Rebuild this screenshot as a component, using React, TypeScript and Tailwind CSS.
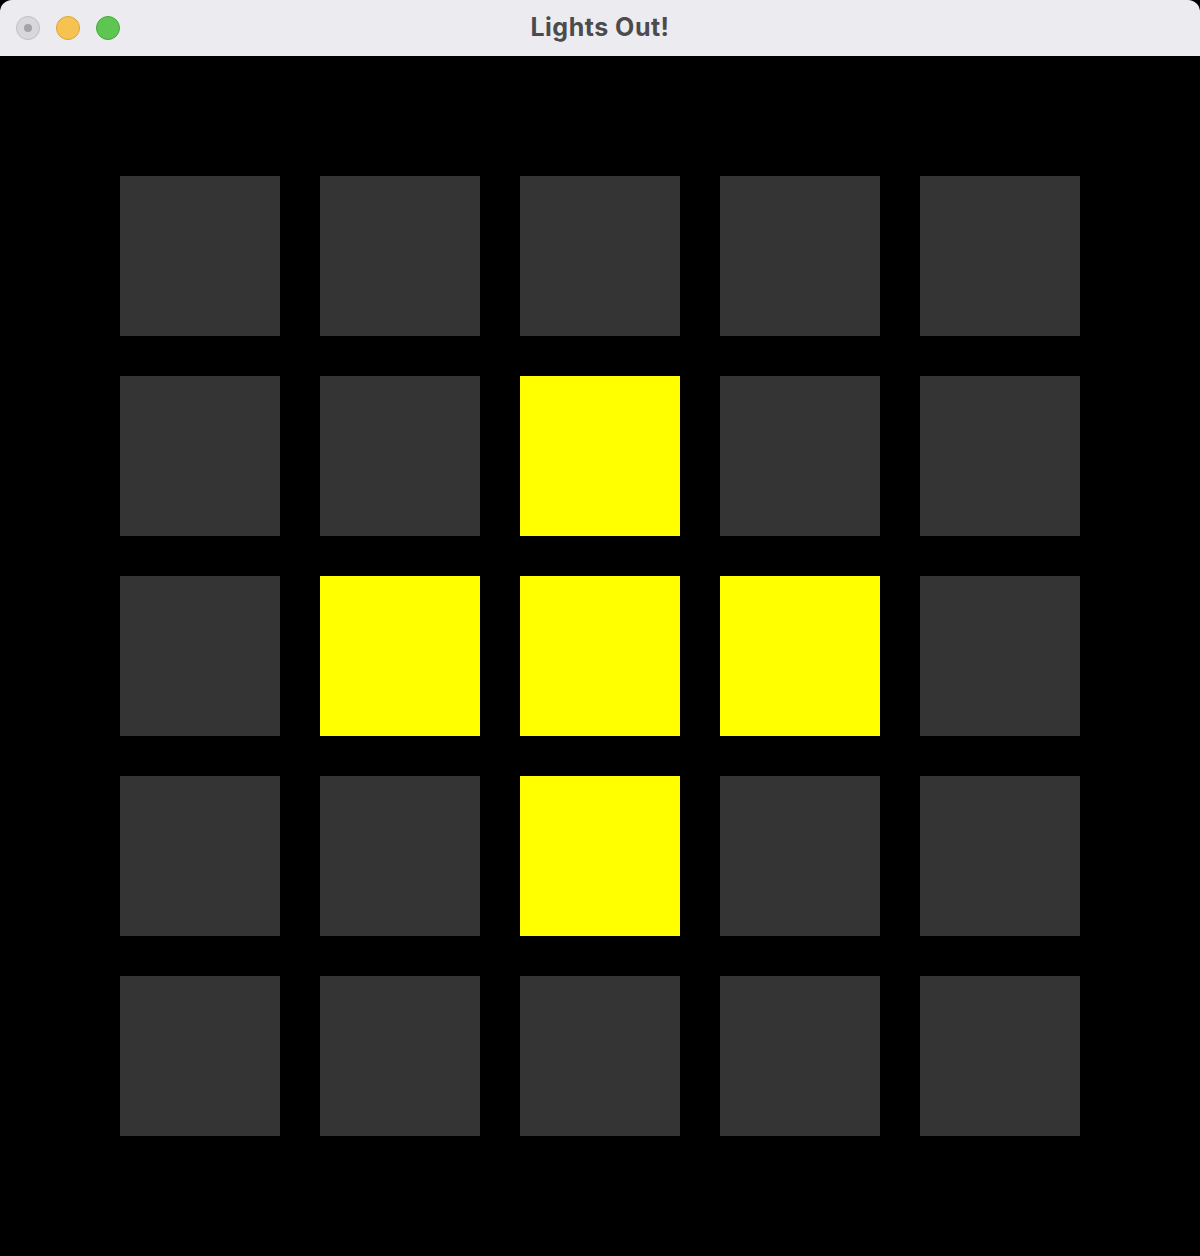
const LIT = new Set(['1-2', '2-1', '2-2', '2-3', '3-2']);

export default function App() {
  const rows = [0, 1, 2, 3, 4];
  return (
    <div className="w-[1200px] h-[1256px] bg-black flex flex-col">
      {/* Window title bar */}
      <div className="h-14 bg-[#ececf0] rounded-t-xl flex items-center relative shrink-0">
        <div className="flex gap-4 pl-4">
          <div className="w-6 h-6 rounded-full bg-[#d8d8dc] border border-[#bfbfc4] flex items-center justify-center">
            <div className="w-2 h-2 rounded-full bg-[#a4a4a8]" />
          </div>
          <div className="w-6 h-6 rounded-full bg-[#f6c352] border border-[#dca43a]" />
          <div className="w-6 h-6 rounded-full bg-[#5ec552] border border-[#48a83e]" />
        </div>
        <div className="absolute inset-0 flex items-center justify-center pointer-events-none">
          <span className="font-['Inter',sans-serif] font-bold text-[25px] tracking-[0.02em] text-[#4b4b4e]">Lights Out!</span>
        </div>
      </div>

      {/* Board */}
      <div className="flex-1 flex items-center justify-center">
        <div className="grid grid-cols-5 gap-10">
          {rows.map((r) =>
            rows.map((c) => (
              <div
                key={`${r}-${c}`}
                className={LIT.has(`${r}-${c}`) ? 'w-40 h-40 bg-[#ffff00]' : 'w-40 h-40 bg-[#343434]'}
              />
            ))
          )}
        </div>
      </div>
    </div>
  );
}
